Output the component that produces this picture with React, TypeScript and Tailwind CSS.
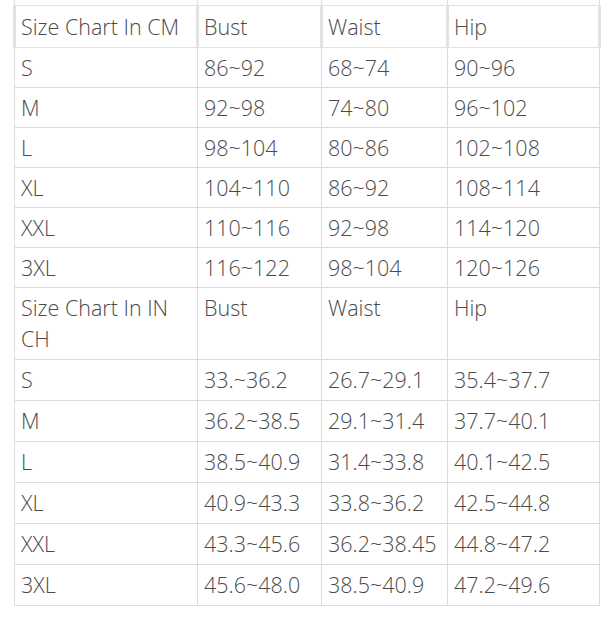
const cm = [
  ['S', '86~92', '68~74', '90~96'],
  ['M', '92~98', '74~80', '96~102'],
  ['L', '98~104', '80~86', '102~108'],
  ['XL', '104~110', '86~92', '108~114'],
  ['XXL', '110~116', '92~98', '114~120'],
  ['3XL', '116~122', '98~104', '120~126'],
];

const inch = [
  ['S', '33.~36.2', '26.7~29.1', '35.4~37.7'],
  ['M', '36.2~38.5', '29.1~31.4', '37.7~40.1'],
  ['L', '38.5~40.9', '31.4~33.8', '40.1~42.5'],
  ['XL', '40.9~43.3', '33.8~36.2', '42.5~44.8'],
  ['XXL', '43.3~45.6', '36.2~38.45', '44.8~47.2'],
  ['3XL', '45.6~48.0', '38.5~40.9', '47.2~49.6'],
];

const cell = 'border border-[#dcdcdc] pl-[6px] pr-1 align-middle';

export default function App() {
  return (
    <div
      className="h-[620px] w-[609px] overflow-hidden bg-white text-[21.5px] font-light text-[#4a4a4a]"
      style={{ fontFamily: '"Open Sans", "Noto Sans", sans-serif' }}
    >
      <table className="ml-[13px] w-[585px] table-fixed border-collapse leading-[31px]">
        <colgroup>
          <col className="w-[183px]" />
          <col className="w-[124px]" />
          <col className="w-[126px]" />
          <col className="w-[152px]" />
        </colgroup>
        <tbody>
          {/* row cut off at the top of the shot */}
          <tr className="h-[5px]">
            {[0, 1, 2, 3].map((i) => (
              <td key={i} className="border-x border-[#dcdcdc] p-0" />
            ))}
          </tr>

          {/* CM header */}
          <tr className="h-[42px]">
            {['Size Chart In CM', 'Bust', 'Waist', 'Hip'].map((t) => (
              <td key={t} className="border-x-[3px] border-y border-[#e2e2e2] pl-[5px] pr-1 align-middle whitespace-nowrap">
                {t}
              </td>
            ))}
          </tr>
          {cm.map((r) => (
            <tr key={'cm' + r[0]} className="h-[40px]">
              {r.map((v, i) => (
                <td key={i} className={cell}>
                  {v}
                </td>
              ))}
            </tr>
          ))}

          {/* INCH header */}
          <tr className="h-[70px]">
            {['Size Chart In IN CH', 'Bust', 'Waist', 'Hip'].map((t) => (
              <td key={t} className="border border-[#dcdcdc] pl-[6px] pr-1 pt-[4px] pb-[5px] align-top">
                {t}
              </td>
            ))}
          </tr>
          {inch.map((r) => (
            <tr key={'in' + r[0]} className="h-[41px]">
              {r.map((v, i) => (
                <td key={i} className={cell + ' whitespace-nowrap'}>
                  {v}
                </td>
              ))}
            </tr>
          ))}
        </tbody>
      </table>
    </div>
  );
}
